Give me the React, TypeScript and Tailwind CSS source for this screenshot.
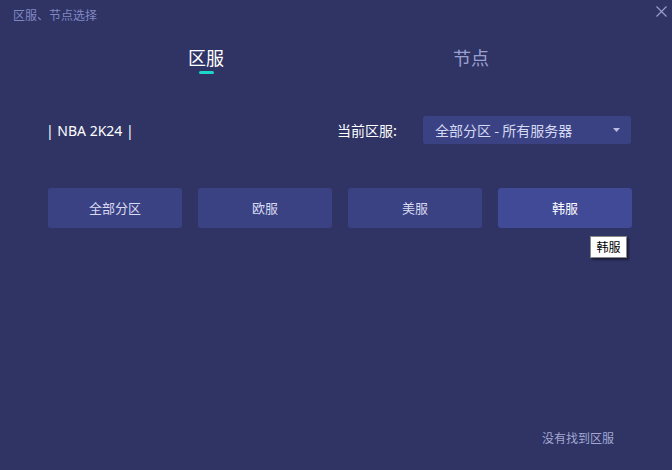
import React from "react";

const font = { fontFamily: '"Microsoft YaHei", "Noto Sans CJK SC", "Noto Sans", sans-serif' };

export default function App() {
  const buttons = ["全部分区", "欧服", "美服", "韩服"];
  return (
    <div className="w-[672px] h-[470px] bg-[#2f3465] relative flex flex-col overflow-hidden" style={font}>
      <div className="flex items-start justify-between h-[30px]">
        <div className="pl-[13px] pt-[6px] text-[12px] leading-[18px] text-[#8088c4]">区服、节点选择</div>
        <svg className="mt-[6px] mr-[5px]" width="11" height="11" viewBox="0 0 11 11">
          <path d="M0.5 0.5 L10.5 10.5 M10.5 0.5 L0.5 10.5" stroke="#9ba2cf" strokeWidth="1.1" />
        </svg>
      </div>
      <div className="flex h-[56px]">
        <div className="flex flex-col items-center ml-[188px] pt-[16px]">
          <span className="text-[18px] leading-[22px] text-white">区服</span>
          <span className="mt-[3px] w-[15px] h-[3px] rounded-full bg-[#1ed6c6]" />
        </div>
        <div className="ml-[229px] pt-[16px]">
          <span className="text-[18px] leading-[22px] text-[#9aa1d2]">节点</span>
        </div>
      </div>
      <div className="flex items-center h-[28px] mt-[30px]">
        <span className="ml-[46px] shrink-0 whitespace-nowrap text-[14px] text-white" style={{ fontFamily: '"Noto Sans", "Open Sans", sans-serif' }}>| NBA 2K24 |</span>
        <span className="ml-auto mr-[26px] shrink-0 whitespace-nowrap text-[14px] text-white">当前区服:</span>
        <div className="mr-[41px] shrink-0 w-[208px] h-[28px] rounded-[3px] bg-[#3b4284] flex items-center justify-between pl-[12px] pr-[11px]">
          <span className="text-[14px] text-[#d6d9f2] whitespace-nowrap">全部分区 - 所有服务器</span>
          <svg width="7" height="4" viewBox="0 0 7 4"><path d="M0 0 H7 L3.5 4 Z" fill="#b9bde0" /></svg>
        </div>
      </div>
      <div className="flex gap-[16px] ml-[48px] mt-[44px]">
        {buttons.map((b, i) => (
          <div
            key={b}
            className={`w-[134px] h-[40px] rounded-[3px] flex items-center justify-center text-[13px] ${i === 3 ? "bg-[#414a96] text-white" : "bg-[#3b4283] text-[#d8dbf2]"}`}
          >
            {b}
          </div>
        ))}
      </div>
      <div className="absolute left-[590px] top-[236px] w-[37px] h-[22px] bg-white border border-[#8a8a8a] shadow-[2px_2px_2px_rgba(0,0,0,0.45)] flex items-center justify-center text-[12px] text-black">
        韩服
      </div>
      <div className="absolute left-[542px] top-[429px] text-[12px] leading-[18px] text-[#a2a8d2]">没有找到区服</div>
    </div>
  );
}
